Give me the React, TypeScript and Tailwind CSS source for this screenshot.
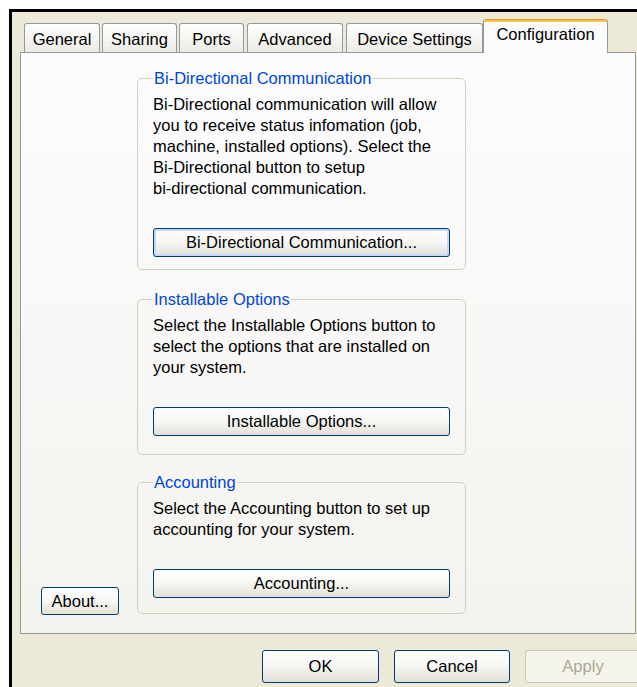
import React from 'react';

const font = { fontFamily: '"Liberation Sans", Arial, sans-serif' };

type TabProps = { label: string; width: string; margin: string; active?: boolean };

const Tab = ({ label, width, margin, active }: TabProps) =>
  active ? (
    <div
      className={`relative z-10 flex h-[34px] flex-col rounded-t-[3px] border-x border-[#919B9C] bg-[#FCFCFE] ${width} ${margin}`}
    >
      <div className="h-[3px] rounded-t-[3px] border-t border-[#E68B2C] bg-[#FFC83C]" />
      <div className="flex flex-1 items-start justify-center pt-[2px] leading-[21px]">{label}</div>
    </div>
  ) : (
    <div
      className={`mb-px flex h-[29px] items-center justify-center rounded-t-[3px] border-x border-t border-[#919B9C] bg-gradient-to-b from-white to-[#ECEBE6] pt-[3px] leading-[21px] ${width} ${margin}`}
    >
      {label}
    </div>
  );

const XpButton = ({
  children,
  className = '',
  disabled,
  hot,
}: {
  children: React.ReactNode;
  className?: string;
  disabled?: boolean;
  hot?: boolean;
}) => (
  <button
    type="button"
    className={`flex items-center justify-center rounded-[3px] border leading-[21px] ${
      disabled
        ? 'border-[#C9C7BA] bg-[#F5F4EA] text-[#ACA899]'
        : 'border-[#003C74] bg-gradient-to-b from-white via-[#F6F6F3] to-[#E2E0D6] text-black'
    } ${hot ? 'shadow-[inset_0_0_0_2px_#C6D6F3]' : ''} ${className}`}
  >
    {children}
  </button>
);

const GroupBox = ({
  title,
  lines,
  action,
  className = '',
  bottom,
  hot,
}: {
  title: string;
  lines: string[];
  action: string;
  className?: string;
  bottom: string;
  hot?: boolean;
}) => (
  <fieldset className={`rounded-[5px] border border-[#D0D0BF] px-[15px] ${bottom} ${className}`}>
    <legend className="px-[1px] leading-[21px] text-[#0046D5]">{title}</legend>
    <p className="mt-[5px] leading-[21px]">
      {lines.map((l) => (
        <span key={l} className="block">
          {l}
        </span>
      ))}
    </p>
    <XpButton hot={hot} className="mt-[29px] h-[29px] w-full">
      {action}
    </XpButton>
  </fieldset>
);

export default function App() {
  return (
    <div className="h-[687px] w-[637px] overflow-hidden bg-white pl-[9px] pt-[9px] text-[16.5px] text-black" style={font}>
      <div className="h-full border-l-[3px] border-t-[3px] border-black bg-[#ECE9D8] pl-[8px] pt-[7px]">
        {/* tab strip */}
        <div className="-mb-px flex h-[34px] items-end">
          <Tab label="General" width="w-[76px]" margin="ml-[4px]" />
          <Tab label="Sharing" width="w-[75px]" margin="ml-[2px]" />
          <Tab label="Ports" width="w-[65px]" margin="ml-[2px]" />
          <Tab label="Advanced" width="w-[96px]" margin="ml-[3px]" />
          <Tab label="Device Settings" width="w-[137px]" margin="ml-[3px]" />
          <Tab label="Configuration" width="w-[125px]" margin="ml-0" active />
        </div>

        {/* page */}
        <div className="flex h-[582px] w-[616px] border border-[#919B9C] bg-gradient-to-b from-[#FCFCFE] to-[#F4F3EE] pl-[20px] pt-[15px]">
          <div className="flex h-[547px] w-[78px] items-end">
            <XpButton className="h-[28px] w-[78px]">About...</XpButton>
          </div>
          <div className="ml-[18px] flex w-[329px] flex-col">
            <GroupBox
              title="Bi-Directional Communication"
              lines={[
                'Bi-Directional communication will allow',
                'you to receive status infomation (job,',
                'machine, installed options). Select the',
                'Bi-Directional button to setup',
                'bi-directional communication.',
              ]}
              action="Bi-Directional Communication..."
              bottom="pb-[12px]"
              hot
            />
            <GroupBox
              title="Installable Options"
              lines={[
                'Select the Installable Options button to',
                'select the options that are installed on',
                'your system.',
              ]}
              action="Installable Options..."
              bottom="pb-[18px]"
              className="mt-[19px]"
            />
            <GroupBox
              title="Accounting"
              lines={['Select the Accounting button to set up', 'accounting for your system.']}
              action="Accounting..."
              bottom="pb-[15px]"
              className="mt-[17px]"
            />
          </div>
        </div>

        {/* dialog buttons */}
        <div className="ml-[242px] mt-[16px] flex gap-[15px]">
          <XpButton className="h-[33px] w-[117px] shrink-0">OK</XpButton>
          <XpButton className="h-[33px] w-[116px] shrink-0">Cancel</XpButton>
          <XpButton className="h-[33px] w-[116px] shrink-0" disabled>
            Apply
          </XpButton>
        </div>
      </div>
    </div>
  );
}
